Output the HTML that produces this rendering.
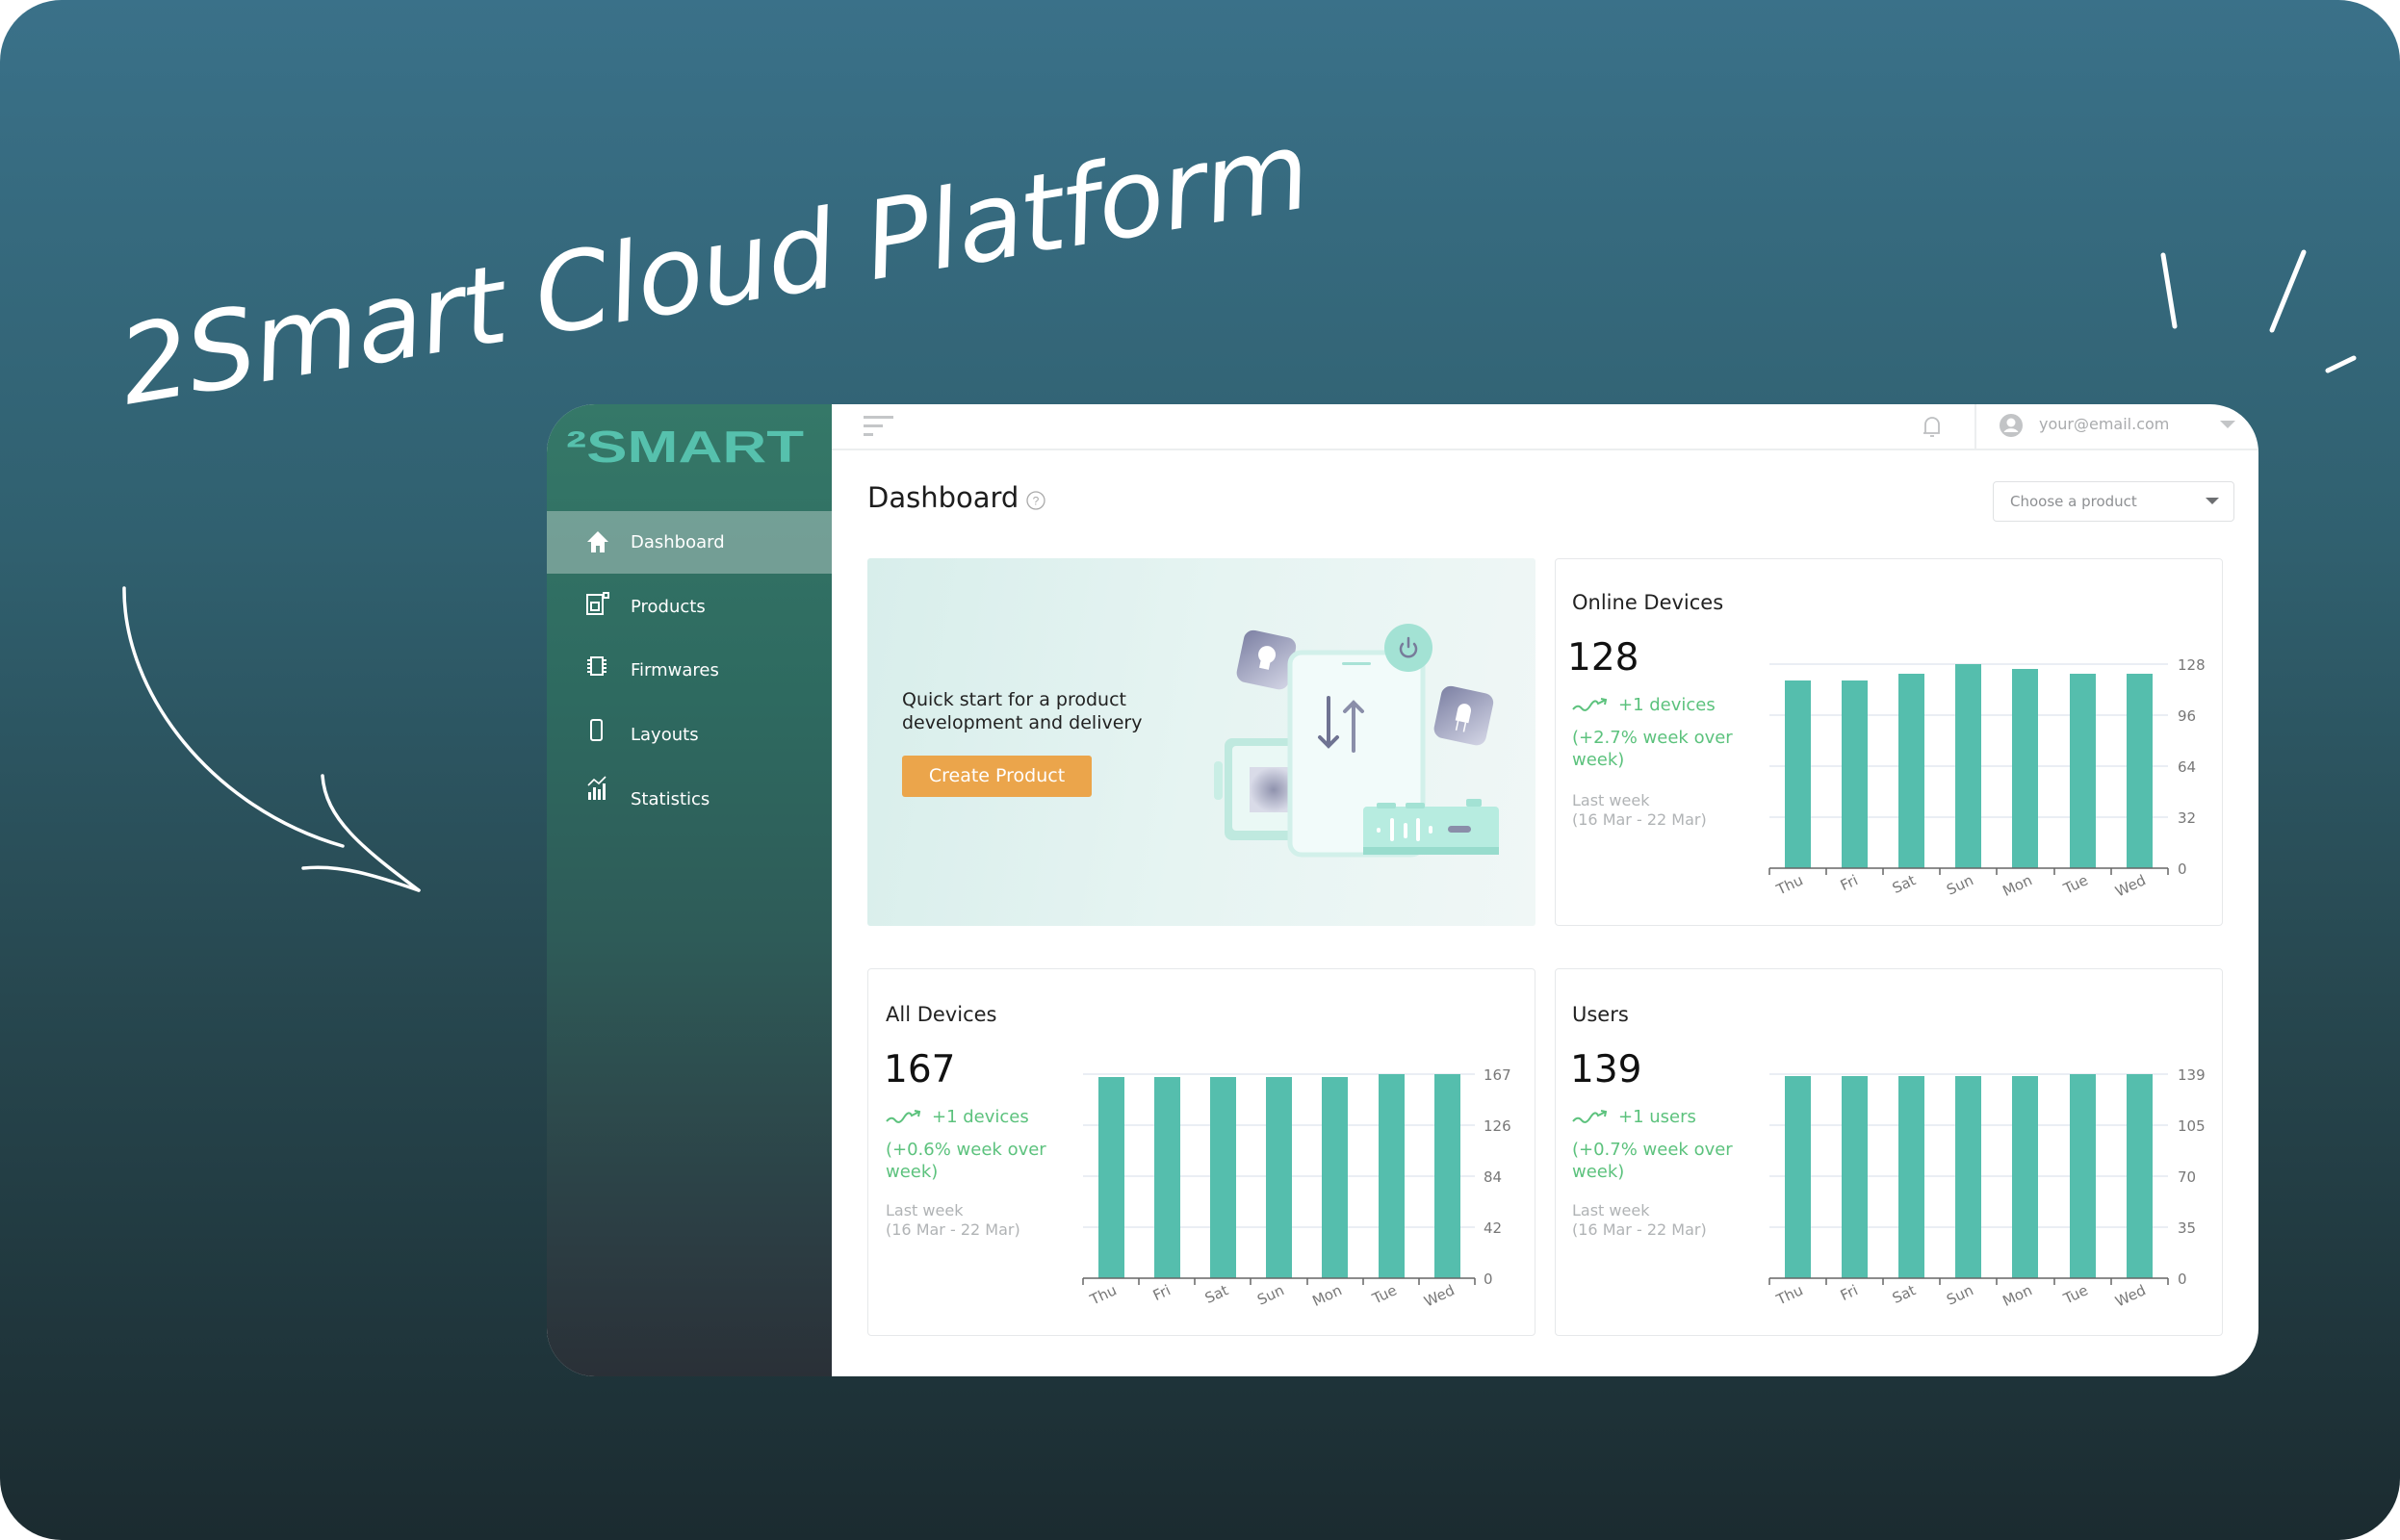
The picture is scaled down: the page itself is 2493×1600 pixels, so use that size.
<!DOCTYPE html>
<html><head><meta charset="utf-8">
<style>
*{margin:0;padding:0;box-sizing:border-box}
html,body{width:2493px;height:1600px;background:#fff;overflow:hidden;font-family:"Liberation Sans",sans-serif}
#bg{position:absolute;left:0;top:0;width:2493px;height:1600px;border-radius:64px;background:linear-gradient(180deg,#3a7189 0%,#30606f 35%,#27474f 65%,#1b2b30 100%)}
.win{position:absolute;left:568px;top:420px;width:1778px;height:1010px;border-radius:50px;background:#fff;overflow:hidden}
.side{position:absolute;left:0;top:0;width:296px;height:1010px;background:linear-gradient(180deg,#357868 0%,#2e6a60 30%,#2e5b58 55%,#2c3e44 85%,#2a3037 100%)}
.abs{position:absolute}
.mi{position:absolute;left:87px;color:#fff;font-size:18px;font-family:"DejaVu Sans","Liberation Sans",sans-serif}
.card{position:absolute;background:#fff;border:1.5px solid #e6e8ea;border-radius:4px}
.t{position:absolute;white-space:nowrap}
.title{font-size:21px;color:#222;font-family:"DejaVu Sans",sans-serif}
.num{font-size:39px;color:#111;font-family:"DejaVu Sans",sans-serif}
.g{font-size:18px;color:#5cc27d;font-family:"DejaVu Sans",sans-serif}
.gr{font-size:16px;color:#b0b3b5;font-family:"DejaVu Sans",sans-serif}
</style></head><body>
<div id="bg"></div>

<div class="win">
  <div class="side">
    <svg class="abs" style="left:0;top:0" width="296" height="200">
      <text x="20" y="60" font-family="Liberation Sans" font-weight="bold" font-size="46" fill="#56c1ad" textLength="247" lengthAdjust="spacingAndGlyphs">²SMART</text>
    </svg>
    <div class="abs" style="left:0;top:111px;width:296px;height:65px;background:rgba(255,255,255,0.32)"></div>
    <svg class="abs" style="left:40px;top:130px" width="30" height="320" fill="#fff">
      <path d="M13 2 L2 13 H6 V24 H11 V17 H15 V24 H20 V13 H24 Z"/>
      <g fill="none" stroke="#fff" stroke-width="2"><rect x="2" y="68" width="16" height="20"/><rect x="6" y="76" width="8" height="8"/><rect x="19" y="66" width="5" height="5"/></g>
      <g fill="none" stroke="#fff" stroke-width="2"><rect x="6" y="133" width="12" height="18"/><path d="M2 136h4M2 140h4M2 144h4M2 148h4M18 136h4M18 140h4M18 144h4M18 148h4"/></g>
      <g fill="none" stroke="#fff" stroke-width="2"><rect x="6" y="198" width="11" height="21" rx="2"/></g>
      <g><rect x="3" y="273" width="3" height="8"/><rect x="8" y="268" width="3" height="13"/><rect x="13" y="270" width="3" height="11"/><rect x="18" y="264" width="3" height="17"/><path d="M3 266 L9 260 L14 264 L21 257" fill="none" stroke="#fff" stroke-width="1.6"/></g>
    </svg>
    <div class="mi" style="top:133px">Dashboard</div>
    <div class="mi" style="top:200px">Products</div>
    <div class="mi" style="top:266px">Firmwares</div>
    <div class="mi" style="top:333px">Layouts</div>
    <div class="mi" style="top:400px">Statistics</div>
  </div>
  <div class="abs" style="left:296px;top:46px;width:1482px;height:2px;background:#eceeef"></div>
  <div class="abs" style="left:1483px;top:0;width:1.5px;height:47px;background:#eceeef"></div>
  <div class="abs" style="left:329px;top:12px;width:31px;height:3px;background:#c4c6c8"></div>
  <div class="abs" style="left:329px;top:21px;width:20px;height:3px;background:#c4c6c8"></div>
  <div class="abs" style="left:329px;top:30px;width:10px;height:3px;background:#c4c6c8"></div>
  <svg class="abs" style="left:1427px;top:10px" width="24" height="28"><path d="M5 20 V11 a7 7 0 0 1 14 0 V20 H3 M10 23 h4" fill="none" stroke="#bdbfc1" stroke-width="1.8"/></svg>
  <svg class="abs" style="left:1508px;top:9px" width="26" height="26"><circle cx="13" cy="13" r="12" fill="#c2c4c6"/><circle cx="13" cy="10" r="4.5" fill="#fff"/><path d="M5.5 20 a8 6 0 0 1 15 0" fill="#fff"/></svg>
  <div class="t" style="left:1550px;top:11px;font-size:16px;color:#a9abad;font-family:'DejaVu Sans',sans-serif">your@email.com</div>
  <svg class="abs" style="left:1738px;top:17px" width="16" height="10"><path d="M0 0 H16 L8 8 Z" fill="#c3c5c7"/></svg>

  <div class="t" style="left:333px;top:80px;font-size:29px;color:#1d1d1d;font-family:'DejaVu Sans',sans-serif">Dashboard</div>
  <svg class="abs" style="left:497px;top:89px" width="22" height="22"><circle cx="11" cy="11" r="9" fill="none" stroke="#aaa" stroke-width="1.3"/><text x="11" y="15.5" text-anchor="middle" font-size="12" fill="#aaa" font-family="Liberation Sans">?</text></svg>
  <div class="abs" style="left:1502px;top:80px;width:251px;height:42px;border:1.5px solid #dfe1e3;border-radius:4px"></div>
  <div class="t" style="left:1520px;top:92px;font-size:15px;color:#8e9093;font-family:'DejaVu Sans',sans-serif">Choose a product</div>
  <svg class="abs" style="left:1723px;top:97px" width="14" height="8"><path d="M0 0 H14 L7 7 Z" fill="#6d6f72"/></svg>

  <div class="abs" style="left:333px;top:160px;width:694px;height:382px;background:linear-gradient(100deg,#d8eeeb 0%,#e6f4f2 50%,#f0f7f6 100%);border-radius:3px"></div>
  <div class="t" style="left:369px;top:295px;font-size:19px;line-height:24px;color:#222;font-family:'DejaVu Sans',sans-serif">Quick start for a product<br>development and delivery</div>
  <div class="abs" style="left:369px;top:365px;width:197px;height:43px;background:#eba54b;border-radius:3px;color:#fff;font-size:19px;line-height:43px;text-align:center;font-family:'DejaVu Sans',sans-serif">Create Product</div>
  <svg class="abs" style="left:0;top:0" width="1778" height="1010">
    <defs>
      <linearGradient id="tile" x1="0" y1="0" x2="1" y2="1"><stop offset="0" stop-color="#7c80a3"/><stop offset="1" stop-color="#d4d6e6"/></linearGradient>
      <radialGradient id="sq"><stop offset="0" stop-color="#8f92ad"/><stop offset="1" stop-color="#d9dbe8"/></radialGradient>
    </defs>
    <rect x="704" y="347" width="80" height="106" rx="8" fill="#bfe9df"/>
    <rect x="712" y="355" width="70" height="88" rx="4" fill="#eaf8f5"/>
    <rect x="730" y="377" width="50" height="47" fill="url(#sq)"/>
    <rect x="693" y="371" width="9" height="40" rx="4" fill="#c9eee5"/>
    <g transform="rotate(12 747 265)"><rect x="720" y="238" width="55" height="55" rx="10" fill="url(#tile)"/><circle cx="747" cy="260" r="9" fill="#fff"/><rect x="742" y="267" width="10" height="8" fill="#fff"/></g>
    <rect x="772" y="258" width="138" height="210" rx="12" fill="#f2fbfa" stroke="#d2f0ea" stroke-width="5"/>
    <rect x="826" y="268" width="30" height="3" rx="1.5" fill="#a8e2d6"/>
    <path d="M812 305 V355 M803 346 L812 355 L821 346" fill="none" stroke="#6f7392" stroke-width="4" stroke-linecap="round"/>
    <path d="M838 310 V360 M829 319 L838 310 L847 319" fill="none" stroke="#8a8ea9" stroke-width="4" stroke-linecap="round"/>
    <circle cx="895" cy="253" r="25" fill="#a3e2d4"/>
    <path d="M889 249 a8 8 0 1 0 12 0 M895 243 V252" fill="none" stroke="#777b9a" stroke-width="2.5" stroke-linecap="round"/>
    <g transform="rotate(12 952 323)"><rect x="925" y="296" width="55" height="55" rx="10" fill="url(#tile)"/><path d="M945 330 V318 a7 7 0 0 1 14 0 V330 Z" fill="#fff"/><path d="M948 330 V340 M956 330 V340" stroke="#fff" stroke-width="1.5"/></g>
    <rect x="848" y="418" width="141" height="50" rx="4" fill="#b7ece0"/>
    <rect x="848" y="460" width="141" height="8" fill="#98dccd"/>
    <rect x="862" y="414" width="20" height="6" rx="2" fill="#a3e2d4"/><rect x="892" y="414" width="20" height="6" rx="2" fill="#a3e2d4"/><rect x="955" y="410" width="16" height="8" rx="2" fill="#a3e2d4"/>
    <g stroke="#fff" stroke-width="4" stroke-linecap="round"><path d="M864 442 v1 M878 432 v20 M892 437 v12 M905 432 v20 M918 440 v4"/></g>
    <rect x="936" y="438" width="24" height="7" rx="3.5" fill="#8a8ea9"/>
  </svg>

  <div class="card" style="left:1047px;top:160px;width:694px;height:382px"></div>
  <div class="card" style="left:333px;top:586px;width:694px;height:382px"></div>
  <div class="card" style="left:1047px;top:586px;width:694px;height:382px"></div>

  <div class="t title" style="left:1065px;top:194px">Online Devices</div>
  <div class="t num" style="left:1060px;top:241px">128</div>
  <div class="t g" style="left:1065px;top:302px"><svg width="38" height="16" style="vertical-align:middle;margin-right:10px"><path d="M1 12 q5 -6 9 -1 t9 -3 t8 -2 l8 -4 m-5 -1 l5 1 l-1 5" fill="none" stroke="#5cc27d" stroke-width="2"/></svg>+1 devices</div>
  <div class="t g" style="left:1065px;top:335px;line-height:23px">(+2.7% week over<br>week)</div>
  <div class="t gr" style="left:1065px;top:402px;line-height:20px">Last week<br>(16 Mar - 22 Mar)</div>

  <div class="t title" style="left:352px;top:622px">All Devices</div>
  <div class="t num" style="left:350px;top:669px">167</div>
  <div class="t g" style="left:352px;top:730px"><svg width="38" height="16" style="vertical-align:middle;margin-right:10px"><path d="M1 12 q5 -6 9 -1 t9 -3 t8 -2 l8 -4 m-5 -1 l5 1 l-1 5" fill="none" stroke="#5cc27d" stroke-width="2"/></svg>+1 devices</div>
  <div class="t g" style="left:352px;top:763px;line-height:23px">(+0.6% week over<br>week)</div>
  <div class="t gr" style="left:352px;top:828px;line-height:20px">Last week<br>(16 Mar - 22 Mar)</div>

  <div class="t title" style="left:1065px;top:622px">Users</div>
  <div class="t num" style="left:1063px;top:669px">139</div>
  <div class="t g" style="left:1065px;top:730px"><svg width="38" height="16" style="vertical-align:middle;margin-right:10px"><path d="M1 12 q5 -6 9 -1 t9 -3 t8 -2 l8 -4 m-5 -1 l5 1 l-1 5" fill="none" stroke="#5cc27d" stroke-width="2"/></svg>+1 users</div>
  <div class="t g" style="left:1065px;top:763px;line-height:23px">(+0.7% week over<br>week)</div>
  <div class="t gr" style="left:1065px;top:828px;line-height:20px">Last week<br>(16 Mar - 22 Mar)</div>
</div>

<svg class="abs" style="left:0;top:0" width="2493" height="1600" font-family="DejaVu Sans, Liberation Sans, sans-serif">
  <g stroke="#e4e9f1" stroke-width="1.5"><path d="M1838 690H2252M1838 743H2252M1838 796H2252M1838 849H2252"/></g>
  <g fill="#55bead">
    <rect x="1854" y="707" width="27" height="195"/><rect x="1913" y="707" width="27" height="195"/><rect x="1972" y="700" width="27" height="202"/><rect x="2031" y="690" width="27" height="212"/><rect x="2090" y="695" width="27" height="207"/><rect x="2150" y="700" width="27" height="202"/><rect x="2209" y="700" width="27" height="202"/>
  </g>
  <path d="M1838 902H2252M1838 902v7M1897 902v7M1956 902v7M2015 902v7M2074 902v7M2134 902v7M2193 902v7M2252 902v7" stroke="#666" stroke-width="1.5"/>
  <g fill="#777" font-size="15"><text x="2262" y="696">128</text><text x="2262" y="749">96</text><text x="2262" y="802">64</text><text x="2262" y="855">32</text><text x="2262" y="908">0</text></g>
  <g fill="#777" font-size="15" text-anchor="end">
    <text transform="translate(1874 918) rotate(-25)">Thu</text><text transform="translate(1931 918) rotate(-25)">Fri</text><text transform="translate(1991 918) rotate(-25)">Sat</text><text transform="translate(2051 918) rotate(-25)">Sun</text><text transform="translate(2112 918) rotate(-25)">Mon</text><text transform="translate(2170 918) rotate(-25)">Tue</text><text transform="translate(2230 918) rotate(-25)">Wed</text>
  </g>
  <g stroke="#e4e9f1" stroke-width="1.5"><path d="M1125 1116H1532M1125 1169H1532M1125 1222H1532M1125 1275H1532"/></g>
  <g fill="#55bead">
    <rect x="1141" y="1119" width="27" height="209"/><rect x="1199" y="1119" width="27" height="209"/><rect x="1257" y="1119" width="27" height="209"/><rect x="1315" y="1119" width="27" height="209"/><rect x="1373" y="1119" width="27" height="209"/><rect x="1432" y="1116" width="27" height="212"/><rect x="1490" y="1116" width="27" height="212"/>
  </g>
  <path d="M1125 1328H1532M1125 1328v7M1183 1328v7M1241 1328v7M1299 1328v7M1358 1328v7M1416 1328v7M1474 1328v7M1532 1328v7" stroke="#666" stroke-width="1.5"/>
  <g fill="#777" font-size="15"><text x="1541" y="1122">167</text><text x="1541" y="1175">126</text><text x="1541" y="1228">84</text><text x="1541" y="1281">42</text><text x="1541" y="1334">0</text></g>
  <g fill="#777" font-size="15" text-anchor="end">
    <text transform="translate(1161 1344) rotate(-25)">Thu</text><text transform="translate(1217 1344) rotate(-25)">Fri</text><text transform="translate(1277 1344) rotate(-25)">Sat</text><text transform="translate(1335 1344) rotate(-25)">Sun</text><text transform="translate(1395 1344) rotate(-25)">Mon</text><text transform="translate(1452 1344) rotate(-25)">Tue</text><text transform="translate(1512 1344) rotate(-25)">Wed</text>
  </g>
  <g stroke="#e4e9f1" stroke-width="1.5"><path d="M1838 1116H2252M1838 1169H2252M1838 1222H2252M1838 1275H2252"/></g>
  <g fill="#55bead">
    <rect x="1854" y="1118" width="27" height="210"/><rect x="1913" y="1118" width="27" height="210"/><rect x="1972" y="1118" width="27" height="210"/><rect x="2031" y="1118" width="27" height="210"/><rect x="2090" y="1118" width="27" height="210"/><rect x="2150" y="1116" width="27" height="212"/><rect x="2209" y="1116" width="27" height="212"/>
  </g>
  <path d="M1838 1328H2252M1838 1328v7M1897 1328v7M1956 1328v7M2015 1328v7M2074 1328v7M2134 1328v7M2193 1328v7M2252 1328v7" stroke="#666" stroke-width="1.5"/>
  <g fill="#777" font-size="15"><text x="2262" y="1122">139</text><text x="2262" y="1175">105</text><text x="2262" y="1228">70</text><text x="2262" y="1281">35</text><text x="2262" y="1334">0</text></g>
  <g fill="#777" font-size="15" text-anchor="end">
    <text transform="translate(1874 1344) rotate(-25)">Thu</text><text transform="translate(1931 1344) rotate(-25)">Fri</text><text transform="translate(1991 1344) rotate(-25)">Sat</text><text transform="translate(2051 1344) rotate(-25)">Sun</text><text transform="translate(2112 1344) rotate(-25)">Mon</text><text transform="translate(2170 1344) rotate(-25)">Tue</text><text transform="translate(2230 1344) rotate(-25)">Wed</text>
  </g>

  <text x="132" y="420" transform="rotate(-9.5 132 420)" font-family="DejaVu Sans ExtraLight, DejaVu Sans, sans-serif" font-weight="200" font-style="italic" font-size="112" fill="#fff" textLength="1250" lengthAdjust="spacing">2Smart Cloud Platform</text>
  <g fill="none" stroke="#fff" stroke-width="3.5" stroke-linecap="round">
    <path d="M129 611 C128 720 220 840 356 879"/>
    <path d="M335 806 C338 850 375 880 435 925"/>
    <path d="M315 902 C355 898 390 910 435 925"/>
  </g>
  <g stroke="#fff" stroke-width="5" stroke-linecap="round">
    <path d="M2247 265 L2259 339"/><path d="M2393 262 L2360 343"/><path d="M2418 385 L2445 372"/>
  </g>
</svg>
</body></html>
